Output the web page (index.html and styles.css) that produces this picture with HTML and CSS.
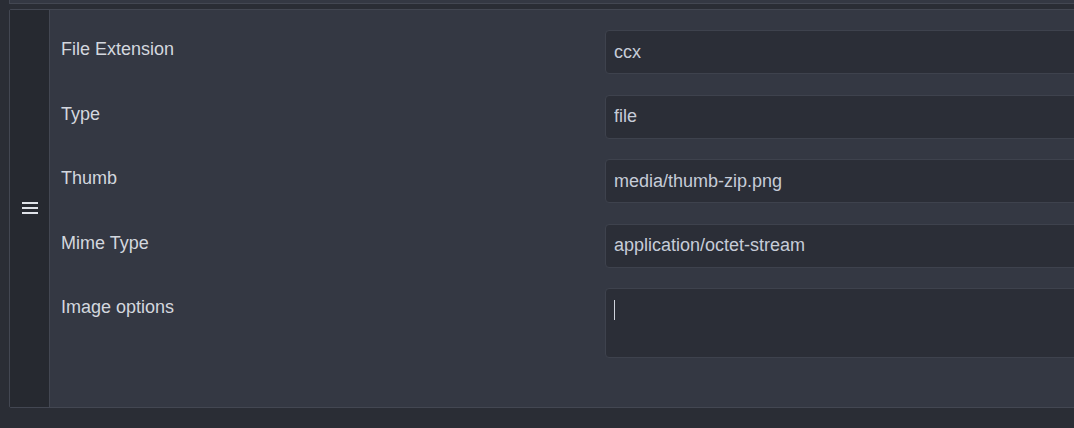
FILE: index.html
```html
<!DOCTYPE html>
<html lang="en">
<head>
<meta charset="UTF-8">
<title>File Types</title>
<link rel="stylesheet" href="styles.css">
</head>
<body>

<!-- Sortable list of file type entries -->
<div class="list">
    <div class="item item-prev"></div>

    <div class="item">
        <div class="handle">
            <svg width="16" height="12" viewBox="0 0 16 12">
                <rect x="0" y="0" width="16" height="2"/>
                <rect x="0" y="5" width="16" height="2"/>
                <rect x="0" y="10" width="16" height="2"/>
            </svg>
        </div>
        <div class="fields">
            <label for="ext">File Extension</label>
            <input type="text" id="ext" value="ccx">

            <label for="type">Type</label>
            <input type="text" id="type" value="file">

            <label for="thumb">Thumb</label>
            <input type="text" id="thumb" value="media/thumb-zip.png">

            <label for="mime">Mime Type</label>
            <input type="text" id="mime" value="application/octet-stream">

            <label>Image options</label>
            <div class="textarea"><span class="caret"></span></div>
        </div>
    </div>
</div>

</body>
</html>
```

FILE: styles.css
```css
/* General */
* {
    margin: 0;
    padding: 0;
    box-sizing: border-box;
}

body {
    background: #2a2d35;
    font-family: 'Liberation Sans', Arial, sans-serif;
    overflow: hidden;
    height: 100vh;
}

/* List */
.list {
    margin-left: 9px;
    width: 1300px;
}

.item {
    display: flex;
    background: #343843;
    border: 1px solid #434752;
    border-radius: 2px;
    margin-bottom: 5px;
}

.item-prev {
    height: 4px;
    border-top: 0;
    border-radius: 0;
}

/* Drag handle */
.handle {
    width: 40px;
    flex-shrink: 0;
    background: #262930;
    border-right: 1px solid #434752;
    display: flex;
    align-items: center;
    justify-content: center;
}

.handle svg {
    fill: #dfe2e8;
    margin-left: 1px;
}

/* Fields */
.fields {
    flex: 1;
    display: grid;
    grid-template-columns: 544px 1fr;
    row-gap: 20.6px;
    padding: 20px 0 48.6px 11px;
}

label {
    font-size: 18px;
    color: #d3d7de;
    padding-top: 9px;
}

input, .textarea {
    height: 44px;
    background: #2b2e37;
    border: 1px solid #3e424d;
    border-radius: 4px;
    padding: 0 8px;
    font-family: 'Liberation Sans', Arial, sans-serif;
    font-size: 18px;
    color: #c6ccd8;
    outline: none;
}

.textarea {
    height: 70px;
    padding-top: 11px;
}

.caret {
    display: block;
    width: 1px;
    height: 20px;
    background: #cfd3dc;
}
```
